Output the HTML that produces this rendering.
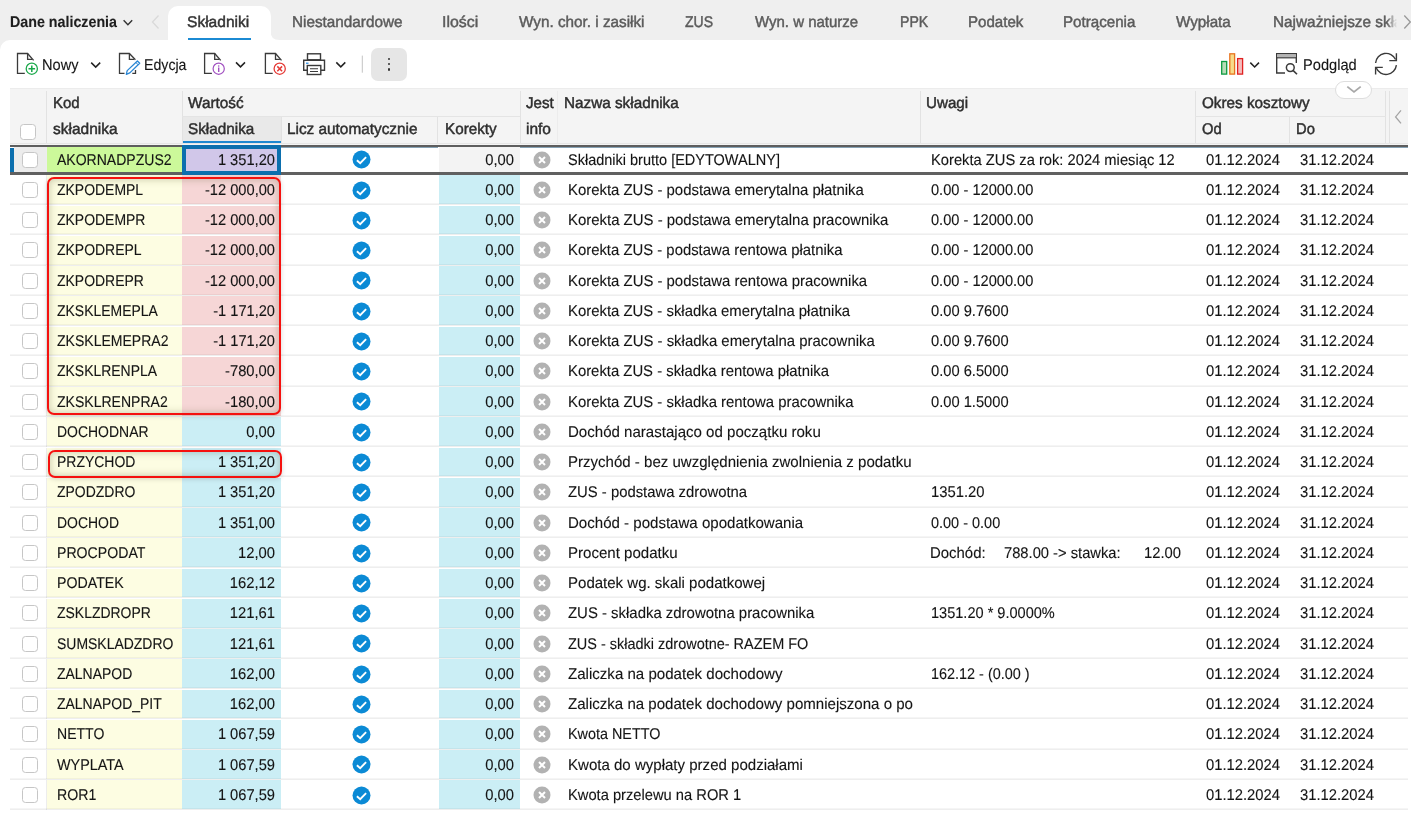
<!DOCTYPE html><html><head><meta charset="utf-8"><style>
*{box-sizing:border-box;margin:0;padding:0}
html,body{width:1411px;height:818px;overflow:hidden;background:#efefef;font-family:"Liberation Sans",sans-serif;}
#w{position:absolute;left:0;top:0;width:1411px;height:818px;will-change:transform}
.a{position:absolute}
.t{position:absolute;white-space:pre;font-size:15.5px;line-height:15px;text-rendering:geometricPrecision;color:#141414;transform-origin:0 0;-webkit-text-stroke:0.12px #141414}
.tr{transform-origin:100% 0;text-align:right}
.tab{color:#5b5b5b;-webkit-text-stroke:0.45px #5b5b5b}
.h{color:#2e2e2e;-webkit-text-stroke:0.45px #2e2e2e}
.cb{position:absolute;width:16px;height:16px;border:1.2px solid #c6c6c6;border-radius:3.5px;background:#fff}
</style></head><body><div id="w">
<div class="t " style="left:10px;top:15.2px;transform:scaleX(0.9201);font-weight:bold;color:#1e1e1e">Dane naliczenia</div>
<svg class="a" style="left:122px;top:18px" width="14" height="10"><path d="M1.6 2.3 L5.9 6.8 L10.2 2.3" fill="none" stroke="#333" stroke-width="1.4"/></svg>
<svg class="a" style="left:148px;top:12px" width="14" height="20"><path d="M10.5 3.5 L4.5 10 L10.5 16.5" fill="none" stroke="#d9d9d9" stroke-width="1.3"/></svg>
<div class="a" style="left:0px;top:40px;width:1411px;height:778px;background:#fff;border-top-left-radius:10px"></div>
<div class="a" style="left:168px;top:6px;width:102.5px;height:40px;background:#fff;border-radius:10px 10px 0 0"></div>
<svg class="a" style="left:270px;top:30px" width="10" height="10"><path d="M0 0 Q0 10 10 10 L0 10 Z" fill="#fff"/></svg>
<div class="a" style="left:188px;top:37.9px;width:63px;height:2px;background:#1b8ad3;"></div>
<div class="t tab" style="left:187.2px;top:15.2px;transform:scaleX(1.0043);color:#333;-webkit-text-stroke:0.45px #333">Składniki</div>
<div class="t tab" style="left:291.5px;top:15.2px;transform:scaleX(0.9865);">Niestandardowe</div>
<div class="t tab" style="left:442.3px;top:15.2px;transform:scaleX(1.0251);">Ilości</div>
<div class="t tab" style="left:519.3px;top:15.2px;transform:scaleX(0.9856);">Wyn. chor. i zasiłki</div>
<div class="t tab" style="left:685.4px;top:15.2px;transform:scaleX(0.9032);">ZUS</div>
<div class="t tab" style="left:755.4px;top:15.2px;transform:scaleX(0.9674);">Wyn. w naturze</div>
<div class="t tab" style="left:900.2px;top:15.2px;transform:scaleX(0.9092);">PPK</div>
<div class="t tab" style="left:967.5px;top:15.2px;transform:scaleX(0.9740);">Podatek</div>
<div class="t tab" style="left:1062.8px;top:15.2px;transform:scaleX(0.9770);">Potrącenia</div>
<div class="t tab" style="left:1176.1px;top:15.2px;transform:scaleX(0.9811);">Wypłata</div>
<div class="a" style="left:1273.3px;top:0;width:124px;height:40px;overflow:hidden;-webkit-mask-image:linear-gradient(90deg,#000 92%,transparent 100%)"><div class="t tab" style="left:0;top:15.2px;transform:scaleX(0.99)">Najważniejsze składniki</div></div>
<svg class="a" style="left:1401px;top:12px" width="10" height="20"><path d="M3.3 3.5 L9.3 10 L3.3 16.5" fill="none" stroke="#9a9a9a" stroke-width="1.3"/></svg>
<svg class="a" style="left:0;top:0" width="1411" height="100"><path d="M24.8 73.3 L17.5 73.3 L17.5 53.5 L27.6 53.5 L33.6 60.4" fill="none" stroke="#3a3a3a" stroke-width="1.3"/><path d="M27.6 53.5 L27.6 59.4 L32 59.4" fill="none" stroke="#3a3a3a" stroke-width="1.3"/><circle cx="31.8" cy="68.7" r="5.6" fill="#fff" stroke="#1aa84a" stroke-width="1.3"/><path d="M31.8 65.4V72M28.5 68.7H35.1" stroke="#1aa84a" stroke-width="1.5"/><path d="M91.2 62.6 L95.7 67.1 L100.2 62.6" fill="none" stroke="#222" stroke-width="1.5"/><path d="M124.5 73.3 L119.5 73.3 L119.5 53.5 L129.4 53.5 L135.4 59.8" fill="none" stroke="#3a3a3a" stroke-width="1.3"/><path d="M129.4 53.5 L129.4 59.4 L134 59.4" fill="none" stroke="#3a3a3a" stroke-width="1.3"/><path d="M135.5 70 L135.5 73.3 L132.3 73.3" fill="none" stroke="#3a3a3a" stroke-width="1.3"/><path d="M126.3 74.3 L127.2 70.6 L137.4 61 L139.7 63.3 L129.8 72.9 Z" fill="#fff" stroke="#2a86d4" stroke-width="1.3" stroke-linejoin="round"/><path d="M135.9 62.5 L138.2 64.8" stroke="#2a86d4" stroke-width="1"/><path d="M211.9 73.3 L204.6 73.3 L204.6 53.5 L214.7 53.5 L220.7 60.4" fill="none" stroke="#3a3a3a" stroke-width="1.3"/><path d="M214.7 53.5 L214.7 59.4 L219.1 59.4" fill="none" stroke="#3a3a3a" stroke-width="1.3"/><circle cx="218.7" cy="68.7" r="5.6" fill="#fff" stroke="#a04fc0" stroke-width="1.2"/><path d="M218.7 67.6V71.9" stroke="#a04fc0" stroke-width="1.4"/><circle cx="218.7" cy="66" r="0.8" fill="#a04fc0"/><path d="M236 62.4 L240.5 66.9 L245 62.4" fill="none" stroke="#222" stroke-width="1.5"/><path d="M272.7 73.3 L265.4 73.3 L265.4 53.5 L275.5 53.5 L281.5 60.4" fill="none" stroke="#3a3a3a" stroke-width="1.3"/><path d="M275.5 53.5 L275.5 59.4 L279.9 59.4" fill="none" stroke="#3a3a3a" stroke-width="1.3"/><circle cx="279.7" cy="68.7" r="5.6" fill="#fff" stroke="#e53935" stroke-width="1.3"/><path d="M277.3 66.4L282.1 71.2M282.1 66.4L277.3 71.2" stroke="#e53935" stroke-width="1.5"/><rect x="307.5" y="53.8" width="13" height="6" fill="none" stroke="#3a3a3a" stroke-width="1.4"/><path d="M307 70.2 H303.7 V60.3 H324.5 V70.2 H321" fill="none" stroke="#3a3a3a" stroke-width="1.4"/><rect x="307.3" y="65.5" width="13.5" height="9" fill="#fff" stroke="#3a3a3a" stroke-width="1.4"/><path d="M310 68.7H318M310 71.5H318" stroke="#3a3a3a" stroke-width="1.1"/><path d="M306 63.2H308.5" stroke="#1e88e5" stroke-width="1.2"/><path d="M336.3 62.4 L340.8 66.9 L345.3 62.4" fill="none" stroke="#222" stroke-width="1.5"/><path d="M362.3 55.6V72.7" stroke="#c4c4c4" stroke-width="1"/><rect x="1221.7" y="61.5" width="5" height="12.6" fill="#b8dcb8" stroke="#0d9a40" stroke-width="1.3"/><rect x="1229.8" y="53.8" width="4.8" height="20.3" fill="#f7dc8a" stroke="#e8731f" stroke-width="1.3"/><rect x="1237.6" y="58.6" width="5" height="15.5" fill="#f4bcbc" stroke="#e02020" stroke-width="1.3"/><path d="M1250.3 62.6 L1254.65 67 L1259 62.6" fill="none" stroke="#222" stroke-width="1.5"/><path d="M1285 73 H1276.7 V53.8 H1296.3 V63" fill="none" stroke="#3a3a3a" stroke-width="1.4"/><rect x="1277" y="54.2" width="19" height="3.2" fill="#b5b5b5"/><path d="M1276.7 57.8H1296.3" stroke="#3a3a3a" stroke-width="1.2"/><circle cx="1290.3" cy="67.6" r="3.9" fill="#fff" stroke="#3a3a3a" stroke-width="1.5"/><path d="M1293 70.4 L1297 74.3" stroke="#3a3a3a" stroke-width="1.6"/><path d="M1375.6 63 A10.5 10.5 0 0 1 1395.6 59.5" fill="none" stroke="#3a3a3a" stroke-width="1.4"/><path d="M1396.4 53.2 V60.6 H1389.3" fill="none" stroke="#3a3a3a" stroke-width="1.4"/><path d="M1396.4 65.2 A10.5 10.5 0 0 1 1376.3 68" fill="none" stroke="#3a3a3a" stroke-width="1.4"/><path d="M1375.6 74.6 V67.4 H1382.8" fill="none" stroke="#3a3a3a" stroke-width="1.4"/></svg>
<div class="a" style="left:371.2px;top:48.1px;width:35.5px;height:32.7px;background:#e6e6e6;border-radius:7px"></div>
<div class="a" style="left:388px;top:57.6px;width:2.2px;height:2.2px;background:#333;border-radius:50%"></div>
<div class="a" style="left:388px;top:63px;width:2.2px;height:2.2px;background:#333;border-radius:50%"></div>
<div class="a" style="left:388px;top:68.4px;width:2.2px;height:2.2px;background:#333;border-radius:50%"></div>
<div class="t " style="left:42.4px;top:57.8px;transform:scaleX(0.9417);">Nowy</div>
<div class="t " style="left:144.3px;top:57.8px;transform:scaleX(0.9135);">Edycja</div>
<div class="t " style="left:1302.9px;top:57.9px;transform:scaleX(0.9440);">Podgląd</div>
<div class="a" style="left:10px;top:88px;width:1398px;height:57.2px;background:#f4f4f4;"></div>
<div class="a" style="left:10px;top:88px;width:1398px;height:1px;background:#ececec;"></div>
<div class="a" style="left:182px;top:116.5px;width:99px;height:24.3px;background:#e9e9e9;"></div>
<div class="a" style="left:182px;top:140.8px;width:99px;height:2.2px;background:#1e88d0;"></div>
<div class="a" style="left:46.3px;top:91px;width:1px;height:52px;background:#e2e2e2;"></div>
<div class="a" style="left:181.5px;top:91px;width:1px;height:52px;background:#e2e2e2;"></div>
<div class="a" style="left:280.6px;top:116.5px;width:1px;height:26.5px;background:#e2e2e2;"></div>
<div class="a" style="left:437.4px;top:116.5px;width:1px;height:26.5px;background:#e2e2e2;"></div>
<div class="a" style="left:519.6px;top:91px;width:1px;height:52px;background:#e2e2e2;"></div>
<div class="a" style="left:557.3px;top:91px;width:1px;height:52px;background:#ececec;"></div>
<div class="a" style="left:919.6px;top:91px;width:1px;height:52px;background:#e2e2e2;"></div>
<div class="a" style="left:1194.6px;top:91px;width:1px;height:52px;background:#e2e2e2;"></div>
<div class="a" style="left:1289.4px;top:116.5px;width:1px;height:26.5px;background:#e2e2e2;"></div>
<div class="a" style="left:1385.3px;top:91px;width:1px;height:52px;background:#e2e2e2;"></div>
<div class="a" style="left:1389px;top:91px;width:1px;height:52px;background:#e2e2e2;"></div>
<div class="a" style="left:182px;top:116px;width:338px;height:1px;background:#e4e4e4;"></div>
<div class="a" style="left:1195px;top:116px;width:191px;height:1px;background:#e4e4e4;"></div>
<div class="a" style="left:10px;top:142.6px;width:1398px;height:1px;background:#e6e6e6;"></div>
<div class="cb" style="left:20.2px;top:124.3px"></div>
<div class="t h" style="left:53px;top:95.7px;transform:scaleX(0.9682);">Kod</div>
<div class="t h" style="left:53px;top:121.6px;">składnika</div>
<div class="t h" style="left:188px;top:95.7px;transform:scaleX(0.9886);">Wartość</div>
<div class="t h" style="left:188px;top:121.6px;transform:scaleX(0.9872);">Składnika</div>
<div class="t h" style="left:286.8px;top:121.6px;transform:scaleX(0.9896);">Licz automatycznie</div>
<div class="t h" style="left:444.8px;top:121.6px;transform:scaleX(0.9838);">Korekty</div>
<div class="t h" style="left:526px;top:95.7px;transform:scaleX(0.9773);">Jest</div>
<div class="t h" style="left:526px;top:121.6px;">info</div>
<div class="t h" style="left:563.9px;top:95.7px;transform:scaleX(0.9860);">Nazwa składnika</div>
<div class="t h" style="left:926px;top:95.7px;transform:scaleX(0.9779);">Uwagi</div>
<div class="t h" style="left:1201.8px;top:95.7px;transform:scaleX(0.9847);">Okres kosztowy</div>
<div class="t h" style="left:1201.8px;top:121.6px;transform:scaleX(0.9506);">Od</div>
<div class="t h" style="left:1295.9px;top:121.6px;transform:scaleX(0.9518);">Do</div>
<svg class="a" style="left:1393px;top:107.6px" width="10" height="18"><path d="M8 2.4 L2.6 8.9 L8 15.4" fill="none" stroke="#a4a4a4" stroke-width="1.3"/></svg>
<div class="a" style="left:14px;top:145.2px;width:33px;height:28.75px;background:#ececec;"></div>
<div class="a" style="left:47px;top:145.2px;width:135px;height:28.75px;background:#ccf99a;"></div>
<div class="a" style="left:182px;top:145.2px;width:99px;height:28.75px;background:#d1c7e9;"></div>
<div class="a" style="left:439px;top:145.2px;width:81px;height:28.75px;background:#f3f3f3;"></div>
<div class="a" style="left:46.3px;top:145.2px;width:1px;height:29.25px;background:#ededed;"></div>
<div class="a" style="left:10px;top:173px;width:1398px;height:1px;background:rgba(0,0,0,0.04);"></div>
<div class="a" style="left:10px;top:174px;width:1398px;height:1px;background:rgba(0,0,0,0.065);"></div>
<div class="cb" style="left:21.5px;top:151.6px"></div>
<div class="t " style="left:57px;top:152.6px;transform:scaleX(0.9047);">AKORNADPZUS2</div>
<div class="t tr " style="left:-25.3px;width:300px;top:152.6px;transform:scaleX(0.9465);">1 351,20</div>
<svg class="a" style="left:351.5px;top:150.4px" width="19" height="19"><circle cx="9.5" cy="9.5" r="9" fill="#0b8ad5"/><path d="M4.9 10.2 L8.2 13.1 L14.1 7.1" fill="none" stroke="#fff" stroke-width="1.9"/></svg>
<div class="t tr " style="left:213.8px;width:300px;top:152.6px;transform:scaleX(0.9521);">0,00</div>
<svg class="a" style="left:532.5px;top:150.6px" width="18" height="18"><circle cx="9" cy="9" r="8.5" fill="#b2b2b2"/><path d="M6 6 L12 12 M12 6 L6 12" fill="none" stroke="#fff" stroke-width="2"/></svg>
<div class="t " style="left:567.8px;top:152.6px;transform:scaleX(0.9354);">Składniki brutto [EDYTOWALNY]</div>
<div class="t " style="left:930.5px;top:152.6px;transform:scaleX(0.9492);">Korekta ZUS za rok: 2024 miesiąc 12</div>
<div class="t " style="left:1205.9px;top:152.6px;transform:scaleX(0.9540);">01.12.2024</div>
<div class="t " style="left:1300px;top:152.6px;transform:scaleX(0.9540);">31.12.2024</div>
<div class="a" style="left:47px;top:175.45px;width:135px;height:28.75px;background:#fdfde2;"></div>
<div class="a" style="left:182px;top:175.45px;width:99px;height:28.75px;background:#f6d6d6;"></div>
<div class="a" style="left:439px;top:175.45px;width:81px;height:28.75px;background:#cbeef5;"></div>
<div class="a" style="left:46.3px;top:175.45px;width:1px;height:29.25px;background:#ededed;"></div>
<div class="a" style="left:10px;top:203px;width:1398px;height:1px;background:rgba(0,0,0,0.04);"></div>
<div class="a" style="left:10px;top:204px;width:1398px;height:1px;background:rgba(0,0,0,0.065);"></div>
<div class="cb" style="left:21.5px;top:181.85px"></div>
<div class="t " style="left:57px;top:182.85px;transform:scaleX(0.9008);">ZKPODEMPL</div>
<div class="t tr " style="left:-25.3px;width:300px;top:182.85px;transform:scaleX(0.9450);">-12 000,00</div>
<svg class="a" style="left:351.5px;top:180.65px" width="19" height="19"><circle cx="9.5" cy="9.5" r="9" fill="#0b8ad5"/><path d="M4.9 10.2 L8.2 13.1 L14.1 7.1" fill="none" stroke="#fff" stroke-width="1.9"/></svg>
<div class="t tr " style="left:213.8px;width:300px;top:182.85px;transform:scaleX(0.9521);">0,00</div>
<svg class="a" style="left:532.5px;top:180.85px" width="18" height="18"><circle cx="9" cy="9" r="8.5" fill="#b2b2b2"/><path d="M6 6 L12 12 M12 6 L6 12" fill="none" stroke="#fff" stroke-width="2"/></svg>
<div class="t " style="left:567.8px;top:182.85px;transform:scaleX(0.9616);">Korekta ZUS - podstawa emerytalna płatnika</div>
<div class="t " style="left:930.5px;top:182.85px;transform:scaleX(0.9421);">0.00 - 12000.00</div>
<div class="t " style="left:1205.9px;top:182.85px;transform:scaleX(0.9540);">01.12.2024</div>
<div class="t " style="left:1300px;top:182.85px;transform:scaleX(0.9540);">31.12.2024</div>
<div class="a" style="left:47px;top:205.7px;width:135px;height:28.75px;background:#fdfde2;"></div>
<div class="a" style="left:182px;top:205.7px;width:99px;height:28.75px;background:#f6d6d6;"></div>
<div class="a" style="left:439px;top:205.7px;width:81px;height:28.75px;background:#cbeef5;"></div>
<div class="a" style="left:46.3px;top:205.7px;width:1px;height:29.25px;background:#ededed;"></div>
<div class="a" style="left:10px;top:233px;width:1398px;height:1px;background:rgba(0,0,0,0.04);"></div>
<div class="a" style="left:10px;top:234px;width:1398px;height:1px;background:rgba(0,0,0,0.065);"></div>
<div class="cb" style="left:21.5px;top:212.1px"></div>
<div class="t " style="left:57px;top:213.1px;transform:scaleX(0.9007);">ZKPODEMPR</div>
<div class="t tr " style="left:-25.3px;width:300px;top:213.1px;transform:scaleX(0.9450);">-12 000,00</div>
<svg class="a" style="left:351.5px;top:210.9px" width="19" height="19"><circle cx="9.5" cy="9.5" r="9" fill="#0b8ad5"/><path d="M4.9 10.2 L8.2 13.1 L14.1 7.1" fill="none" stroke="#fff" stroke-width="1.9"/></svg>
<div class="t tr " style="left:213.8px;width:300px;top:213.1px;transform:scaleX(0.9521);">0,00</div>
<svg class="a" style="left:532.5px;top:211.1px" width="18" height="18"><circle cx="9" cy="9" r="8.5" fill="#b2b2b2"/><path d="M6 6 L12 12 M12 6 L6 12" fill="none" stroke="#fff" stroke-width="2"/></svg>
<div class="t " style="left:567.8px;top:213.1px;transform:scaleX(0.9634);">Korekta ZUS - podstawa emerytalna pracownika</div>
<div class="t " style="left:930.5px;top:213.1px;transform:scaleX(0.9421);">0.00 - 12000.00</div>
<div class="t " style="left:1205.9px;top:213.1px;transform:scaleX(0.9540);">01.12.2024</div>
<div class="t " style="left:1300px;top:213.1px;transform:scaleX(0.9540);">31.12.2024</div>
<div class="a" style="left:47px;top:235.95px;width:135px;height:28.75px;background:#fdfde2;"></div>
<div class="a" style="left:182px;top:235.95px;width:99px;height:28.75px;background:#f6d6d6;"></div>
<div class="a" style="left:439px;top:235.95px;width:81px;height:28.75px;background:#cbeef5;"></div>
<div class="a" style="left:46.3px;top:235.95px;width:1px;height:29.25px;background:#ededed;"></div>
<div class="a" style="left:10px;top:264px;width:1398px;height:1px;background:rgba(0,0,0,0.04);"></div>
<div class="a" style="left:10px;top:265px;width:1398px;height:1px;background:rgba(0,0,0,0.065);"></div>
<div class="cb" style="left:21.5px;top:242.35px"></div>
<div class="t " style="left:57px;top:243.35px;transform:scaleX(0.9006);">ZKPODREPL</div>
<div class="t tr " style="left:-25.3px;width:300px;top:243.35px;transform:scaleX(0.9450);">-12 000,00</div>
<svg class="a" style="left:351.5px;top:241.15px" width="19" height="19"><circle cx="9.5" cy="9.5" r="9" fill="#0b8ad5"/><path d="M4.9 10.2 L8.2 13.1 L14.1 7.1" fill="none" stroke="#fff" stroke-width="1.9"/></svg>
<div class="t tr " style="left:213.8px;width:300px;top:243.35px;transform:scaleX(0.9521);">0,00</div>
<svg class="a" style="left:532.5px;top:241.35px" width="18" height="18"><circle cx="9" cy="9" r="8.5" fill="#b2b2b2"/><path d="M6 6 L12 12 M12 6 L6 12" fill="none" stroke="#fff" stroke-width="2"/></svg>
<div class="t " style="left:567.8px;top:243.35px;transform:scaleX(0.9597);">Korekta ZUS - podstawa rentowa płatnika</div>
<div class="t " style="left:930.5px;top:243.35px;transform:scaleX(0.9421);">0.00 - 12000.00</div>
<div class="t " style="left:1205.9px;top:243.35px;transform:scaleX(0.9540);">01.12.2024</div>
<div class="t " style="left:1300px;top:243.35px;transform:scaleX(0.9540);">31.12.2024</div>
<div class="a" style="left:47px;top:266.2px;width:135px;height:28.75px;background:#fdfde2;"></div>
<div class="a" style="left:182px;top:266.2px;width:99px;height:28.75px;background:#f6d6d6;"></div>
<div class="a" style="left:439px;top:266.2px;width:81px;height:28.75px;background:#cbeef5;"></div>
<div class="a" style="left:46.3px;top:266.2px;width:1px;height:29.25px;background:#ededed;"></div>
<div class="a" style="left:10px;top:294px;width:1398px;height:1px;background:rgba(0,0,0,0.04);"></div>
<div class="a" style="left:10px;top:295px;width:1398px;height:1px;background:rgba(0,0,0,0.065);"></div>
<div class="cb" style="left:21.5px;top:272.6px"></div>
<div class="t " style="left:57px;top:273.6px;transform:scaleX(0.9006);">ZKPODREPR</div>
<div class="t tr " style="left:-25.3px;width:300px;top:273.6px;transform:scaleX(0.9450);">-12 000,00</div>
<svg class="a" style="left:351.5px;top:271.4px" width="19" height="19"><circle cx="9.5" cy="9.5" r="9" fill="#0b8ad5"/><path d="M4.9 10.2 L8.2 13.1 L14.1 7.1" fill="none" stroke="#fff" stroke-width="1.9"/></svg>
<div class="t tr " style="left:213.8px;width:300px;top:273.6px;transform:scaleX(0.9521);">0,00</div>
<svg class="a" style="left:532.5px;top:271.6px" width="18" height="18"><circle cx="9" cy="9" r="8.5" fill="#b2b2b2"/><path d="M6 6 L12 12 M12 6 L6 12" fill="none" stroke="#fff" stroke-width="2"/></svg>
<div class="t " style="left:567.8px;top:273.6px;transform:scaleX(0.9618);">Korekta ZUS - podstawa rentowa pracownika</div>
<div class="t " style="left:930.5px;top:273.6px;transform:scaleX(0.9421);">0.00 - 12000.00</div>
<div class="t " style="left:1205.9px;top:273.6px;transform:scaleX(0.9540);">01.12.2024</div>
<div class="t " style="left:1300px;top:273.6px;transform:scaleX(0.9540);">31.12.2024</div>
<div class="a" style="left:47px;top:296.45px;width:135px;height:28.75px;background:#fdfde2;"></div>
<div class="a" style="left:182px;top:296.45px;width:99px;height:28.75px;background:#f6d6d6;"></div>
<div class="a" style="left:439px;top:296.45px;width:81px;height:28.75px;background:#cbeef5;"></div>
<div class="a" style="left:46.3px;top:296.45px;width:1px;height:29.25px;background:#ededed;"></div>
<div class="a" style="left:10px;top:324px;width:1398px;height:1px;background:rgba(0,0,0,0.04);"></div>
<div class="a" style="left:10px;top:325px;width:1398px;height:1px;background:rgba(0,0,0,0.065);"></div>
<div class="cb" style="left:21.5px;top:302.85px"></div>
<div class="t " style="left:57px;top:303.85px;transform:scaleX(0.9007);">ZKSKLEMEPLA</div>
<div class="t tr " style="left:-25.3px;width:300px;top:303.85px;transform:scaleX(0.9429);">-1 171,20</div>
<svg class="a" style="left:351.5px;top:301.65px" width="19" height="19"><circle cx="9.5" cy="9.5" r="9" fill="#0b8ad5"/><path d="M4.9 10.2 L8.2 13.1 L14.1 7.1" fill="none" stroke="#fff" stroke-width="1.9"/></svg>
<div class="t tr " style="left:213.8px;width:300px;top:303.85px;transform:scaleX(0.9521);">0,00</div>
<svg class="a" style="left:532.5px;top:301.85px" width="18" height="18"><circle cx="9" cy="9" r="8.5" fill="#b2b2b2"/><path d="M6 6 L12 12 M12 6 L6 12" fill="none" stroke="#fff" stroke-width="2"/></svg>
<div class="t " style="left:567.8px;top:303.85px;transform:scaleX(0.9604);">Korekta ZUS - składka emerytalna płatnika</div>
<div class="t " style="left:930.5px;top:303.85px;transform:scaleX(0.9471);">0.00 9.7600</div>
<div class="t " style="left:1205.9px;top:303.85px;transform:scaleX(0.9540);">01.12.2024</div>
<div class="t " style="left:1300px;top:303.85px;transform:scaleX(0.9540);">31.12.2024</div>
<div class="a" style="left:47px;top:326.7px;width:135px;height:28.75px;background:#fdfde2;"></div>
<div class="a" style="left:182px;top:326.7px;width:99px;height:28.75px;background:#f6d6d6;"></div>
<div class="a" style="left:439px;top:326.7px;width:81px;height:28.75px;background:#cbeef5;"></div>
<div class="a" style="left:46.3px;top:326.7px;width:1px;height:29.25px;background:#ededed;"></div>
<div class="a" style="left:10px;top:354px;width:1398px;height:1px;background:rgba(0,0,0,0.04);"></div>
<div class="a" style="left:10px;top:355px;width:1398px;height:1px;background:rgba(0,0,0,0.065);"></div>
<div class="cb" style="left:21.5px;top:333.1px"></div>
<div class="t " style="left:57px;top:334.1px;transform:scaleX(0.9048);">ZKSKLEMEPRA2</div>
<div class="t tr " style="left:-25.3px;width:300px;top:334.1px;transform:scaleX(0.9429);">-1 171,20</div>
<svg class="a" style="left:351.5px;top:331.9px" width="19" height="19"><circle cx="9.5" cy="9.5" r="9" fill="#0b8ad5"/><path d="M4.9 10.2 L8.2 13.1 L14.1 7.1" fill="none" stroke="#fff" stroke-width="1.9"/></svg>
<div class="t tr " style="left:213.8px;width:300px;top:334.1px;transform:scaleX(0.9521);">0,00</div>
<svg class="a" style="left:532.5px;top:332.1px" width="18" height="18"><circle cx="9" cy="9" r="8.5" fill="#b2b2b2"/><path d="M6 6 L12 12 M12 6 L6 12" fill="none" stroke="#fff" stroke-width="2"/></svg>
<div class="t " style="left:567.8px;top:334.1px;transform:scaleX(0.9624);">Korekta ZUS - składka emerytalna pracownika</div>
<div class="t " style="left:930.5px;top:334.1px;transform:scaleX(0.9471);">0.00 9.7600</div>
<div class="t " style="left:1205.9px;top:334.1px;transform:scaleX(0.9540);">01.12.2024</div>
<div class="t " style="left:1300px;top:334.1px;transform:scaleX(0.9540);">31.12.2024</div>
<div class="a" style="left:47px;top:356.95px;width:135px;height:28.75px;background:#fdfde2;"></div>
<div class="a" style="left:182px;top:356.95px;width:99px;height:28.75px;background:#f6d6d6;"></div>
<div class="a" style="left:439px;top:356.95px;width:81px;height:28.75px;background:#cbeef5;"></div>
<div class="a" style="left:46.3px;top:356.95px;width:1px;height:29.25px;background:#ededed;"></div>
<div class="a" style="left:10px;top:385px;width:1398px;height:1px;background:rgba(0,0,0,0.04);"></div>
<div class="a" style="left:10px;top:386px;width:1398px;height:1px;background:rgba(0,0,0,0.065);"></div>
<div class="cb" style="left:21.5px;top:363.35px"></div>
<div class="t " style="left:57px;top:364.35px;transform:scaleX(0.9006);">ZKSKLRENPLA</div>
<div class="t tr " style="left:-25.3px;width:300px;top:364.35px;transform:scaleX(0.9499);">-780,00</div>
<svg class="a" style="left:351.5px;top:362.15px" width="19" height="19"><circle cx="9.5" cy="9.5" r="9" fill="#0b8ad5"/><path d="M4.9 10.2 L8.2 13.1 L14.1 7.1" fill="none" stroke="#fff" stroke-width="1.9"/></svg>
<div class="t tr " style="left:213.8px;width:300px;top:364.35px;transform:scaleX(0.9521);">0,00</div>
<svg class="a" style="left:532.5px;top:362.35px" width="18" height="18"><circle cx="9" cy="9" r="8.5" fill="#b2b2b2"/><path d="M6 6 L12 12 M12 6 L6 12" fill="none" stroke="#fff" stroke-width="2"/></svg>
<div class="t " style="left:567.8px;top:364.35px;transform:scaleX(0.9584);">Korekta ZUS - składka rentowa płatnika</div>
<div class="t " style="left:930.5px;top:364.35px;transform:scaleX(0.9471);">0.00 6.5000</div>
<div class="t " style="left:1205.9px;top:364.35px;transform:scaleX(0.9540);">01.12.2024</div>
<div class="t " style="left:1300px;top:364.35px;transform:scaleX(0.9540);">31.12.2024</div>
<div class="a" style="left:47px;top:387.2px;width:135px;height:28.75px;background:#fdfde2;"></div>
<div class="a" style="left:182px;top:387.2px;width:99px;height:28.75px;background:#f6d6d6;"></div>
<div class="a" style="left:439px;top:387.2px;width:81px;height:28.75px;background:#cbeef5;"></div>
<div class="a" style="left:46.3px;top:387.2px;width:1px;height:29.25px;background:#ededed;"></div>
<div class="a" style="left:10px;top:415px;width:1398px;height:1px;background:rgba(0,0,0,0.04);"></div>
<div class="a" style="left:10px;top:416px;width:1398px;height:1px;background:rgba(0,0,0,0.065);"></div>
<div class="cb" style="left:21.5px;top:393.6px"></div>
<div class="t " style="left:57px;top:394.6px;transform:scaleX(0.9048);">ZKSKLRENPRA2</div>
<div class="t tr " style="left:-25.3px;width:300px;top:394.6px;transform:scaleX(0.9499);">-180,00</div>
<svg class="a" style="left:351.5px;top:392.4px" width="19" height="19"><circle cx="9.5" cy="9.5" r="9" fill="#0b8ad5"/><path d="M4.9 10.2 L8.2 13.1 L14.1 7.1" fill="none" stroke="#fff" stroke-width="1.9"/></svg>
<div class="t tr " style="left:213.8px;width:300px;top:394.6px;transform:scaleX(0.9521);">0,00</div>
<svg class="a" style="left:532.5px;top:392.6px" width="18" height="18"><circle cx="9" cy="9" r="8.5" fill="#b2b2b2"/><path d="M6 6 L12 12 M12 6 L6 12" fill="none" stroke="#fff" stroke-width="2"/></svg>
<div class="t " style="left:567.8px;top:394.6px;transform:scaleX(0.9607);">Korekta ZUS - składka rentowa pracownika</div>
<div class="t " style="left:930.5px;top:394.6px;transform:scaleX(0.9471);">0.00 1.5000</div>
<div class="t " style="left:1205.9px;top:394.6px;transform:scaleX(0.9540);">01.12.2024</div>
<div class="t " style="left:1300px;top:394.6px;transform:scaleX(0.9540);">31.12.2024</div>
<div class="a" style="left:47px;top:417.45px;width:135px;height:28.75px;background:#fdfde2;"></div>
<div class="a" style="left:182px;top:417.45px;width:99px;height:28.75px;background:#cbeef5;"></div>
<div class="a" style="left:439px;top:417.45px;width:81px;height:28.75px;background:#cbeef5;"></div>
<div class="a" style="left:46.3px;top:417.45px;width:1px;height:29.25px;background:#ededed;"></div>
<div class="a" style="left:10px;top:445px;width:1398px;height:1px;background:rgba(0,0,0,0.04);"></div>
<div class="a" style="left:10px;top:446px;width:1398px;height:1px;background:rgba(0,0,0,0.065);"></div>
<div class="cb" style="left:21.5px;top:423.85px"></div>
<div class="t " style="left:57px;top:424.85px;transform:scaleX(0.9008);">DOCHODNAR</div>
<div class="t tr " style="left:-25.3px;width:300px;top:424.85px;transform:scaleX(0.9521);">0,00</div>
<svg class="a" style="left:351.5px;top:422.65px" width="19" height="19"><circle cx="9.5" cy="9.5" r="9" fill="#0b8ad5"/><path d="M4.9 10.2 L8.2 13.1 L14.1 7.1" fill="none" stroke="#fff" stroke-width="1.9"/></svg>
<div class="t tr " style="left:213.8px;width:300px;top:424.85px;transform:scaleX(0.9521);">0,00</div>
<svg class="a" style="left:532.5px;top:422.85px" width="18" height="18"><circle cx="9" cy="9" r="8.5" fill="#b2b2b2"/><path d="M6 6 L12 12 M12 6 L6 12" fill="none" stroke="#fff" stroke-width="2"/></svg>
<div class="t " style="left:567.8px;top:424.85px;transform:scaleX(0.9714);">Dochód narastająco od początku roku</div>
<div class="t " style="left:1205.9px;top:424.85px;transform:scaleX(0.9540);">01.12.2024</div>
<div class="t " style="left:1300px;top:424.85px;transform:scaleX(0.9540);">31.12.2024</div>
<div class="a" style="left:47px;top:447.7px;width:135px;height:28.75px;background:#fdfde2;"></div>
<div class="a" style="left:182px;top:447.7px;width:99px;height:28.75px;background:#cbeef5;"></div>
<div class="a" style="left:439px;top:447.7px;width:81px;height:28.75px;background:#cbeef5;"></div>
<div class="a" style="left:46.3px;top:447.7px;width:1px;height:29.25px;background:#ededed;"></div>
<div class="a" style="left:10px;top:475px;width:1398px;height:1px;background:rgba(0,0,0,0.04);"></div>
<div class="a" style="left:10px;top:476px;width:1398px;height:1px;background:rgba(0,0,0,0.065);"></div>
<div class="cb" style="left:21.5px;top:454.1px"></div>
<div class="t " style="left:57px;top:455.1px;transform:scaleX(0.9006);">PRZYCHOD</div>
<div class="t tr " style="left:-25.3px;width:300px;top:455.1px;transform:scaleX(0.9465);">1 351,20</div>
<svg class="a" style="left:351.5px;top:452.9px" width="19" height="19"><circle cx="9.5" cy="9.5" r="9" fill="#0b8ad5"/><path d="M4.9 10.2 L8.2 13.1 L14.1 7.1" fill="none" stroke="#fff" stroke-width="1.9"/></svg>
<div class="t tr " style="left:213.8px;width:300px;top:455.1px;transform:scaleX(0.9521);">0,00</div>
<svg class="a" style="left:532.5px;top:453.1px" width="18" height="18"><circle cx="9" cy="9" r="8.5" fill="#b2b2b2"/><path d="M6 6 L12 12 M12 6 L6 12" fill="none" stroke="#fff" stroke-width="2"/></svg>
<div class="t " style="left:567.8px;top:455.1px;transform:scaleX(0.9701);">Przychód - bez uwzględnienia zwolnienia z podatku</div>
<div class="t " style="left:1205.9px;top:455.1px;transform:scaleX(0.9540);">01.12.2024</div>
<div class="t " style="left:1300px;top:455.1px;transform:scaleX(0.9540);">31.12.2024</div>
<div class="a" style="left:47px;top:477.95px;width:135px;height:28.75px;background:#fdfde2;"></div>
<div class="a" style="left:182px;top:477.95px;width:99px;height:28.75px;background:#cbeef5;"></div>
<div class="a" style="left:439px;top:477.95px;width:81px;height:28.75px;background:#cbeef5;"></div>
<div class="a" style="left:46.3px;top:477.95px;width:1px;height:29.25px;background:#ededed;"></div>
<div class="a" style="left:10px;top:506px;width:1398px;height:1px;background:rgba(0,0,0,0.04);"></div>
<div class="a" style="left:10px;top:507px;width:1398px;height:1px;background:rgba(0,0,0,0.065);"></div>
<div class="cb" style="left:21.5px;top:484.35px"></div>
<div class="t " style="left:57px;top:485.35px;transform:scaleX(0.9007);">ZPODZDRO</div>
<div class="t tr " style="left:-25.3px;width:300px;top:485.35px;transform:scaleX(0.9465);">1 351,20</div>
<svg class="a" style="left:351.5px;top:483.15px" width="19" height="19"><circle cx="9.5" cy="9.5" r="9" fill="#0b8ad5"/><path d="M4.9 10.2 L8.2 13.1 L14.1 7.1" fill="none" stroke="#fff" stroke-width="1.9"/></svg>
<div class="t tr " style="left:213.8px;width:300px;top:485.35px;transform:scaleX(0.9521);">0,00</div>
<svg class="a" style="left:532.5px;top:483.35px" width="18" height="18"><circle cx="9" cy="9" r="8.5" fill="#b2b2b2"/><path d="M6 6 L12 12 M12 6 L6 12" fill="none" stroke="#fff" stroke-width="2"/></svg>
<div class="t " style="left:567.8px;top:485.35px;transform:scaleX(0.9581);">ZUS - podstawa zdrowotna</div>
<div class="t " style="left:930.5px;top:485.35px;transform:scaleX(0.9561);">1351.20</div>
<div class="t " style="left:1205.9px;top:485.35px;transform:scaleX(0.9540);">01.12.2024</div>
<div class="t " style="left:1300px;top:485.35px;transform:scaleX(0.9540);">31.12.2024</div>
<div class="a" style="left:47px;top:508.2px;width:135px;height:28.75px;background:#fdfde2;"></div>
<div class="a" style="left:182px;top:508.2px;width:99px;height:28.75px;background:#cbeef5;"></div>
<div class="a" style="left:439px;top:508.2px;width:81px;height:28.75px;background:#cbeef5;"></div>
<div class="a" style="left:46.3px;top:508.2px;width:1px;height:29.25px;background:#ededed;"></div>
<div class="a" style="left:10px;top:536px;width:1398px;height:1px;background:rgba(0,0,0,0.04);"></div>
<div class="a" style="left:10px;top:537px;width:1398px;height:1px;background:rgba(0,0,0,0.065);"></div>
<div class="cb" style="left:21.5px;top:514.6px"></div>
<div class="t " style="left:57px;top:515.6px;transform:scaleX(0.9008);">DOCHOD</div>
<div class="t tr " style="left:-25.3px;width:300px;top:515.6px;transform:scaleX(0.9465);">1 351,00</div>
<svg class="a" style="left:351.5px;top:513.4px" width="19" height="19"><circle cx="9.5" cy="9.5" r="9" fill="#0b8ad5"/><path d="M4.9 10.2 L8.2 13.1 L14.1 7.1" fill="none" stroke="#fff" stroke-width="1.9"/></svg>
<div class="t tr " style="left:213.8px;width:300px;top:515.6px;transform:scaleX(0.9521);">0,00</div>
<svg class="a" style="left:532.5px;top:513.6px" width="18" height="18"><circle cx="9" cy="9" r="8.5" fill="#b2b2b2"/><path d="M6 6 L12 12 M12 6 L6 12" fill="none" stroke="#fff" stroke-width="2"/></svg>
<div class="t " style="left:567.8px;top:515.6px;transform:scaleX(0.9714);">Dochód - podstawa opodatkowania</div>
<div class="t " style="left:930.5px;top:515.6px;transform:scaleX(0.9335);">0.00 - 0.00</div>
<div class="t " style="left:1205.9px;top:515.6px;transform:scaleX(0.9540);">01.12.2024</div>
<div class="t " style="left:1300px;top:515.6px;transform:scaleX(0.9540);">31.12.2024</div>
<div class="a" style="left:47px;top:538.45px;width:135px;height:28.75px;background:#fdfde2;"></div>
<div class="a" style="left:182px;top:538.45px;width:99px;height:28.75px;background:#cbeef5;"></div>
<div class="a" style="left:439px;top:538.45px;width:81px;height:28.75px;background:#cbeef5;"></div>
<div class="a" style="left:46.3px;top:538.45px;width:1px;height:29.25px;background:#ededed;"></div>
<div class="a" style="left:10px;top:566px;width:1398px;height:1px;background:rgba(0,0,0,0.04);"></div>
<div class="a" style="left:10px;top:567px;width:1398px;height:1px;background:rgba(0,0,0,0.065);"></div>
<div class="cb" style="left:21.5px;top:544.85px"></div>
<div class="t " style="left:57px;top:545.85px;transform:scaleX(0.9114);">PROCPODAT</div>
<div class="t tr " style="left:-25.3px;width:300px;top:545.85px;transform:scaleX(0.9540);">12,00</div>
<svg class="a" style="left:351.5px;top:543.65px" width="19" height="19"><circle cx="9.5" cy="9.5" r="9" fill="#0b8ad5"/><path d="M4.9 10.2 L8.2 13.1 L14.1 7.1" fill="none" stroke="#fff" stroke-width="1.9"/></svg>
<div class="t tr " style="left:213.8px;width:300px;top:545.85px;transform:scaleX(0.9521);">0,00</div>
<svg class="a" style="left:532.5px;top:543.85px" width="18" height="18"><circle cx="9" cy="9" r="8.5" fill="#b2b2b2"/><path d="M6 6 L12 12 M12 6 L6 12" fill="none" stroke="#fff" stroke-width="2"/></svg>
<div class="t " style="left:567.8px;top:545.85px;transform:scaleX(0.9719);">Procent podatku</div>
<div class="t " style="left:929.8px;top:545.85px;transform:scaleX(0.9630);">Dochód:</div>
<div class="t " style="left:1004.4px;top:545.85px;transform:scaleX(0.9497);">788.00 -&gt; stawka:</div>
<div class="t tr " style="left:881.3px;width:300px;top:545.85px;transform:scaleX(0.9540);">12.00</div>
<div class="t " style="left:1205.9px;top:545.85px;transform:scaleX(0.9540);">01.12.2024</div>
<div class="t " style="left:1300px;top:545.85px;transform:scaleX(0.9540);">31.12.2024</div>
<div class="a" style="left:47px;top:568.7px;width:135px;height:28.75px;background:#fdfde2;"></div>
<div class="a" style="left:182px;top:568.7px;width:99px;height:28.75px;background:#cbeef5;"></div>
<div class="a" style="left:439px;top:568.7px;width:81px;height:28.75px;background:#cbeef5;"></div>
<div class="a" style="left:46.3px;top:568.7px;width:1px;height:29.25px;background:#ededed;"></div>
<div class="a" style="left:10px;top:596px;width:1398px;height:1px;background:rgba(0,0,0,0.04);"></div>
<div class="a" style="left:10px;top:597px;width:1398px;height:1px;background:rgba(0,0,0,0.065);"></div>
<div class="cb" style="left:21.5px;top:575.1px"></div>
<div class="t " style="left:57px;top:576.1px;transform:scaleX(0.9148);">PODATEK</div>
<div class="t tr " style="left:-25.3px;width:300px;top:576.1px;transform:scaleX(0.9552);">162,12</div>
<svg class="a" style="left:351.5px;top:573.9px" width="19" height="19"><circle cx="9.5" cy="9.5" r="9" fill="#0b8ad5"/><path d="M4.9 10.2 L8.2 13.1 L14.1 7.1" fill="none" stroke="#fff" stroke-width="1.9"/></svg>
<div class="t tr " style="left:213.8px;width:300px;top:576.1px;transform:scaleX(0.9521);">0,00</div>
<svg class="a" style="left:532.5px;top:574.1px" width="18" height="18"><circle cx="9" cy="9" r="8.5" fill="#b2b2b2"/><path d="M6 6 L12 12 M12 6 L6 12" fill="none" stroke="#fff" stroke-width="2"/></svg>
<div class="t " style="left:567.8px;top:576.1px;transform:scaleX(0.9693);">Podatek wg. skali podatkowej</div>
<div class="t " style="left:1205.9px;top:576.1px;transform:scaleX(0.9540);">01.12.2024</div>
<div class="t " style="left:1300px;top:576.1px;transform:scaleX(0.9540);">31.12.2024</div>
<div class="a" style="left:47px;top:598.95px;width:135px;height:28.75px;background:#fdfde2;"></div>
<div class="a" style="left:182px;top:598.95px;width:99px;height:28.75px;background:#cbeef5;"></div>
<div class="a" style="left:439px;top:598.95px;width:81px;height:28.75px;background:#cbeef5;"></div>
<div class="a" style="left:46.3px;top:598.95px;width:1px;height:29.25px;background:#ededed;"></div>
<div class="a" style="left:10px;top:627px;width:1398px;height:1px;background:rgba(0,0,0,0.04);"></div>
<div class="a" style="left:10px;top:628px;width:1398px;height:1px;background:rgba(0,0,0,0.065);"></div>
<div class="cb" style="left:21.5px;top:605.35px"></div>
<div class="t " style="left:57px;top:606.35px;transform:scaleX(0.9006);">ZSKLZDROPR</div>
<div class="t tr " style="left:-25.3px;width:300px;top:606.35px;transform:scaleX(0.9552);">121,61</div>
<svg class="a" style="left:351.5px;top:604.15px" width="19" height="19"><circle cx="9.5" cy="9.5" r="9" fill="#0b8ad5"/><path d="M4.9 10.2 L8.2 13.1 L14.1 7.1" fill="none" stroke="#fff" stroke-width="1.9"/></svg>
<div class="t tr " style="left:213.8px;width:300px;top:606.35px;transform:scaleX(0.9521);">0,00</div>
<svg class="a" style="left:532.5px;top:604.35px" width="18" height="18"><circle cx="9" cy="9" r="8.5" fill="#b2b2b2"/><path d="M6 6 L12 12 M12 6 L6 12" fill="none" stroke="#fff" stroke-width="2"/></svg>
<div class="t " style="left:567.8px;top:606.35px;transform:scaleX(0.9628);">ZUS - składka zdrowotna pracownika</div>
<div class="t " style="left:930.5px;top:606.35px;transform:scaleX(0.9387);">1351.20 * 9.0000%</div>
<div class="t " style="left:1205.9px;top:606.35px;transform:scaleX(0.9540);">01.12.2024</div>
<div class="t " style="left:1300px;top:606.35px;transform:scaleX(0.9540);">31.12.2024</div>
<div class="a" style="left:47px;top:629.2px;width:135px;height:28.75px;background:#fdfde2;"></div>
<div class="a" style="left:182px;top:629.2px;width:99px;height:28.75px;background:#cbeef5;"></div>
<div class="a" style="left:439px;top:629.2px;width:81px;height:28.75px;background:#cbeef5;"></div>
<div class="a" style="left:46.3px;top:629.2px;width:1px;height:29.25px;background:#ededed;"></div>
<div class="a" style="left:10px;top:657px;width:1398px;height:1px;background:rgba(0,0,0,0.04);"></div>
<div class="a" style="left:10px;top:658px;width:1398px;height:1px;background:rgba(0,0,0,0.065);"></div>
<div class="cb" style="left:21.5px;top:635.6px"></div>
<div class="t " style="left:57px;top:636.6px;transform:scaleX(0.9007);">SUMSKLADZDRO</div>
<div class="t tr " style="left:-25.3px;width:300px;top:636.6px;transform:scaleX(0.9552);">121,61</div>
<svg class="a" style="left:351.5px;top:634.4px" width="19" height="19"><circle cx="9.5" cy="9.5" r="9" fill="#0b8ad5"/><path d="M4.9 10.2 L8.2 13.1 L14.1 7.1" fill="none" stroke="#fff" stroke-width="1.9"/></svg>
<div class="t tr " style="left:213.8px;width:300px;top:636.6px;transform:scaleX(0.9521);">0,00</div>
<svg class="a" style="left:532.5px;top:634.6px" width="18" height="18"><circle cx="9" cy="9" r="8.5" fill="#b2b2b2"/><path d="M6 6 L12 12 M12 6 L6 12" fill="none" stroke="#fff" stroke-width="2"/></svg>
<div class="t " style="left:567.8px;top:636.6px;transform:scaleX(0.9334);">ZUS - składki zdrowotne- RAZEM FO</div>
<div class="t " style="left:1205.9px;top:636.6px;transform:scaleX(0.9540);">01.12.2024</div>
<div class="t " style="left:1300px;top:636.6px;transform:scaleX(0.9540);">31.12.2024</div>
<div class="a" style="left:47px;top:659.45px;width:135px;height:28.75px;background:#fdfde2;"></div>
<div class="a" style="left:182px;top:659.45px;width:99px;height:28.75px;background:#cbeef5;"></div>
<div class="a" style="left:439px;top:659.45px;width:81px;height:28.75px;background:#cbeef5;"></div>
<div class="a" style="left:46.3px;top:659.45px;width:1px;height:29.25px;background:#ededed;"></div>
<div class="a" style="left:10px;top:687px;width:1398px;height:1px;background:rgba(0,0,0,0.04);"></div>
<div class="a" style="left:10px;top:688px;width:1398px;height:1px;background:rgba(0,0,0,0.065);"></div>
<div class="cb" style="left:21.5px;top:665.85px"></div>
<div class="t " style="left:57px;top:666.85px;transform:scaleX(0.9007);">ZALNAPOD</div>
<div class="t tr " style="left:-25.3px;width:300px;top:666.85px;transform:scaleX(0.9552);">162,00</div>
<svg class="a" style="left:351.5px;top:664.65px" width="19" height="19"><circle cx="9.5" cy="9.5" r="9" fill="#0b8ad5"/><path d="M4.9 10.2 L8.2 13.1 L14.1 7.1" fill="none" stroke="#fff" stroke-width="1.9"/></svg>
<div class="t tr " style="left:213.8px;width:300px;top:666.85px;transform:scaleX(0.9521);">0,00</div>
<svg class="a" style="left:532.5px;top:664.85px" width="18" height="18"><circle cx="9" cy="9" r="8.5" fill="#b2b2b2"/><path d="M6 6 L12 12 M12 6 L6 12" fill="none" stroke="#fff" stroke-width="2"/></svg>
<div class="t " style="left:567.8px;top:666.85px;transform:scaleX(0.9726);">Zaliczka na podatek dochodowy</div>
<div class="t " style="left:930.5px;top:666.85px;transform:scaleX(0.9303);">162.12 - (0.00 )</div>
<div class="t " style="left:1205.9px;top:666.85px;transform:scaleX(0.9540);">01.12.2024</div>
<div class="t " style="left:1300px;top:666.85px;transform:scaleX(0.9540);">31.12.2024</div>
<div class="a" style="left:47px;top:689.7px;width:135px;height:28.75px;background:#fdfde2;"></div>
<div class="a" style="left:182px;top:689.7px;width:99px;height:28.75px;background:#cbeef5;"></div>
<div class="a" style="left:439px;top:689.7px;width:81px;height:28.75px;background:#cbeef5;"></div>
<div class="a" style="left:46.3px;top:689.7px;width:1px;height:29.25px;background:#ededed;"></div>
<div class="a" style="left:10px;top:717px;width:1398px;height:1px;background:rgba(0,0,0,0.04);"></div>
<div class="a" style="left:10px;top:718px;width:1398px;height:1px;background:rgba(0,0,0,0.065);"></div>
<div class="cb" style="left:21.5px;top:696.1px"></div>
<div class="t " style="left:57px;top:697.1px;transform:scaleX(0.9006);">ZALNAPOD_PIT</div>
<div class="t tr " style="left:-25.3px;width:300px;top:697.1px;transform:scaleX(0.9552);">162,00</div>
<svg class="a" style="left:351.5px;top:694.9px" width="19" height="19"><circle cx="9.5" cy="9.5" r="9" fill="#0b8ad5"/><path d="M4.9 10.2 L8.2 13.1 L14.1 7.1" fill="none" stroke="#fff" stroke-width="1.9"/></svg>
<div class="t tr " style="left:213.8px;width:300px;top:697.1px;transform:scaleX(0.9521);">0,00</div>
<svg class="a" style="left:532.5px;top:695.1px" width="18" height="18"><circle cx="9" cy="9" r="8.5" fill="#b2b2b2"/><path d="M6 6 L12 12 M12 6 L6 12" fill="none" stroke="#fff" stroke-width="2"/></svg>
<div class="t " style="left:567.8px;top:697.1px;transform:scaleX(0.9717);">Zaliczka na podatek dochodowy pomniejszona o po</div>
<div class="t " style="left:1205.9px;top:697.1px;transform:scaleX(0.9540);">01.12.2024</div>
<div class="t " style="left:1300px;top:697.1px;transform:scaleX(0.9540);">31.12.2024</div>
<div class="a" style="left:47px;top:719.95px;width:135px;height:28.75px;background:#fdfde2;"></div>
<div class="a" style="left:182px;top:719.95px;width:99px;height:28.75px;background:#cbeef5;"></div>
<div class="a" style="left:439px;top:719.95px;width:81px;height:28.75px;background:#cbeef5;"></div>
<div class="a" style="left:46.3px;top:719.95px;width:1px;height:29.25px;background:#ededed;"></div>
<div class="a" style="left:10px;top:748px;width:1398px;height:1px;background:rgba(0,0,0,0.04);"></div>
<div class="a" style="left:10px;top:749px;width:1398px;height:1px;background:rgba(0,0,0,0.065);"></div>
<div class="cb" style="left:21.5px;top:726.35px"></div>
<div class="t " style="left:57px;top:727.35px;transform:scaleX(0.9054);">NETTO</div>
<div class="t tr " style="left:-25.3px;width:300px;top:727.35px;transform:scaleX(0.9465);">1 067,59</div>
<svg class="a" style="left:351.5px;top:725.15px" width="19" height="19"><circle cx="9.5" cy="9.5" r="9" fill="#0b8ad5"/><path d="M4.9 10.2 L8.2 13.1 L14.1 7.1" fill="none" stroke="#fff" stroke-width="1.9"/></svg>
<div class="t tr " style="left:213.8px;width:300px;top:727.35px;transform:scaleX(0.9521);">0,00</div>
<svg class="a" style="left:532.5px;top:725.35px" width="18" height="18"><circle cx="9" cy="9" r="8.5" fill="#b2b2b2"/><path d="M6 6 L12 12 M12 6 L6 12" fill="none" stroke="#fff" stroke-width="2"/></svg>
<div class="t " style="left:567.8px;top:727.35px;transform:scaleX(0.9278);">Kwota NETTO</div>
<div class="t " style="left:1205.9px;top:727.35px;transform:scaleX(0.9540);">01.12.2024</div>
<div class="t " style="left:1300px;top:727.35px;transform:scaleX(0.9540);">31.12.2024</div>
<div class="a" style="left:47px;top:750.2px;width:135px;height:28.75px;background:#fdfde2;"></div>
<div class="a" style="left:182px;top:750.2px;width:99px;height:28.75px;background:#cbeef5;"></div>
<div class="a" style="left:439px;top:750.2px;width:81px;height:28.75px;background:#cbeef5;"></div>
<div class="a" style="left:46.3px;top:750.2px;width:1px;height:29.25px;background:#ededed;"></div>
<div class="a" style="left:10px;top:778px;width:1398px;height:1px;background:rgba(0,0,0,0.04);"></div>
<div class="a" style="left:10px;top:779px;width:1398px;height:1px;background:rgba(0,0,0,0.065);"></div>
<div class="cb" style="left:21.5px;top:756.6px"></div>
<div class="t " style="left:57px;top:757.6px;transform:scaleX(0.9295);">WYPLATA</div>
<div class="t tr " style="left:-25.3px;width:300px;top:757.6px;transform:scaleX(0.9465);">1 067,59</div>
<svg class="a" style="left:351.5px;top:755.4px" width="19" height="19"><circle cx="9.5" cy="9.5" r="9" fill="#0b8ad5"/><path d="M4.9 10.2 L8.2 13.1 L14.1 7.1" fill="none" stroke="#fff" stroke-width="1.9"/></svg>
<div class="t tr " style="left:213.8px;width:300px;top:757.6px;transform:scaleX(0.9521);">0,00</div>
<svg class="a" style="left:532.5px;top:755.6px" width="18" height="18"><circle cx="9" cy="9" r="8.5" fill="#b2b2b2"/><path d="M6 6 L12 12 M12 6 L6 12" fill="none" stroke="#fff" stroke-width="2"/></svg>
<div class="t " style="left:567.8px;top:757.6px;transform:scaleX(0.9705);">Kwota do wypłaty przed podziałami</div>
<div class="t " style="left:1205.9px;top:757.6px;transform:scaleX(0.9540);">01.12.2024</div>
<div class="t " style="left:1300px;top:757.6px;transform:scaleX(0.9540);">31.12.2024</div>
<div class="a" style="left:47px;top:780.45px;width:135px;height:28.75px;background:#fdfde2;"></div>
<div class="a" style="left:182px;top:780.45px;width:99px;height:28.75px;background:#cbeef5;"></div>
<div class="a" style="left:439px;top:780.45px;width:81px;height:28.75px;background:#cbeef5;"></div>
<div class="a" style="left:46.3px;top:780.45px;width:1px;height:29.25px;background:#ededed;"></div>
<div class="a" style="left:10px;top:808px;width:1398px;height:1px;background:rgba(0,0,0,0.04);"></div>
<div class="a" style="left:10px;top:809px;width:1398px;height:1px;background:rgba(0,0,0,0.065);"></div>
<div class="cb" style="left:21.5px;top:786.85px"></div>
<div class="t " style="left:57px;top:787.85px;transform:scaleX(0.9128);">ROR1</div>
<div class="t tr " style="left:-25.3px;width:300px;top:787.85px;transform:scaleX(0.9465);">1 067,59</div>
<svg class="a" style="left:351.5px;top:785.65px" width="19" height="19"><circle cx="9.5" cy="9.5" r="9" fill="#0b8ad5"/><path d="M4.9 10.2 L8.2 13.1 L14.1 7.1" fill="none" stroke="#fff" stroke-width="1.9"/></svg>
<div class="t tr " style="left:213.8px;width:300px;top:787.85px;transform:scaleX(0.9521);">0,00</div>
<svg class="a" style="left:532.5px;top:785.85px" width="18" height="18"><circle cx="9" cy="9" r="8.5" fill="#b2b2b2"/><path d="M6 6 L12 12 M12 6 L6 12" fill="none" stroke="#fff" stroke-width="2"/></svg>
<div class="t " style="left:567.8px;top:787.85px;transform:scaleX(0.9484);">Kwota przelewu na ROR 1</div>
<div class="t " style="left:1205.9px;top:787.85px;transform:scaleX(0.9540);">01.12.2024</div>
<div class="t " style="left:1300px;top:787.85px;transform:scaleX(0.9540);">31.12.2024</div>
<div class="a" style="left:10px;top:145px;width:1398px;height:2px;background:#5e5e5e;"></div>
<div class="a" style="left:281px;top:147px;width:157px;height:1px;background:#86a2b5;"></div>
<div class="a" style="left:520px;top:147px;width:888px;height:1px;background:#86a2b5;"></div>
<div class="a" style="left:10px;top:172.2px;width:1398px;height:2.6px;background:#606060;"></div>
<div class="a" style="left:10px;top:147.5px;width:4px;height:24.8px;background:#0b6fae;"></div>
<div class="a" style="left:182px;top:145px;width:99px;height:29.6px;border:4px solid #0b6fae"></div>
<div class="a" style="left:1335.3px;top:81.2px;width:37.2px;height:17.6px;border:1px solid #dedede;border-radius:9px;background:#fff"></div>
<svg class="a" style="left:1345px;top:84px" width="18" height="10"><path d="M2.3 2.6 L9 7.9 L15.7 2.6" fill="none" stroke="#a8a8a8" stroke-width="1.8"/></svg>
<div class="a" style="left:47.4px;top:176.5px;width:234px;height:238.6px;border:2.4px solid #f5110f;border-radius:7px;box-shadow:inset 0 0 7px 1px rgba(70,70,30,0.25), 0 1px 5px rgba(0,0,0,0.16)"></div>
<div class="a" style="left:47.6px;top:450.2px;width:234px;height:28.2px;border:2.4px solid #f5110f;border-radius:7px;box-shadow:inset 0 0 7px 1px rgba(70,70,30,0.25), 0 1px 5px rgba(0,0,0,0.16)"></div>
</div></body></html>
